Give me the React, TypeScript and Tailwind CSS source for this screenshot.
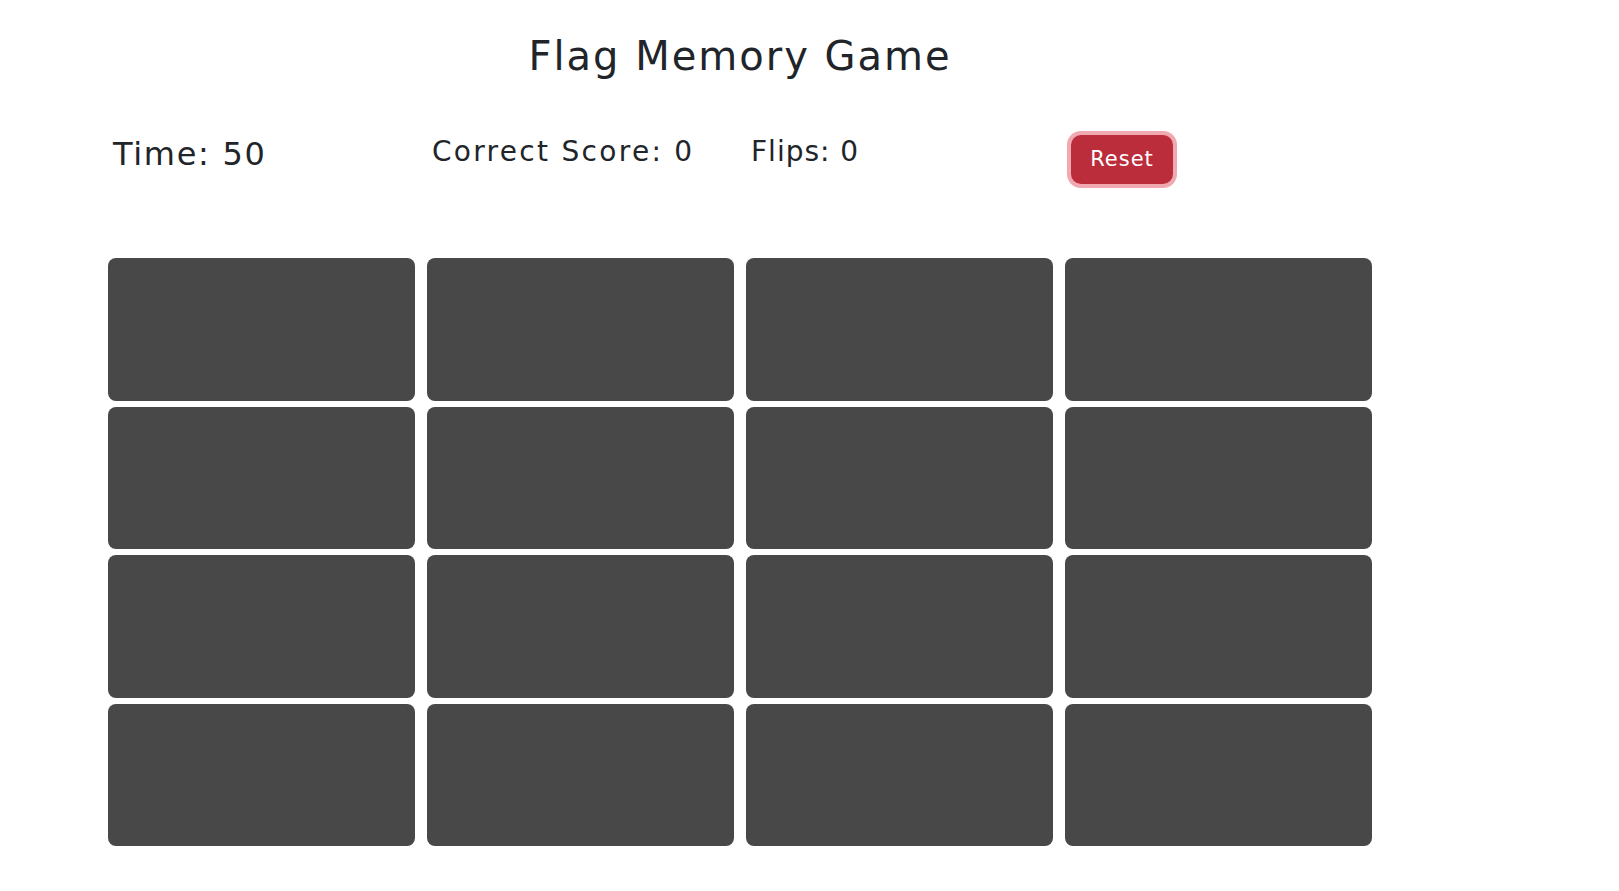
import { useState } from 'react';

const CARDS = Array.from({ length: 16 }, (_, i) => i);

export default function App() {
  const [time] = useState(50);
  const [score, setScore] = useState(0);
  const [flips, setFlips] = useState(0);

  function reset() {
    setScore(0);
    setFlips(0);
  }

  return (
    <div className="min-h-screen bg-white text-[#212529] font-['DejaVu_Sans',sans-serif]">
      <div className="ml-[108px] w-[1264px] pt-[32px]">
        {/* Title */}
        <h1 className="text-center text-[40px] leading-[1.2] tracking-[2px] font-normal">
          Flag Memory Game
        </h1>

        {/* Stats row */}
        <div className="mt-[52px] grid grid-cols-4 gap-x-3 items-start">
          <div className="pl-[5px] mt-[3px] text-[32px] leading-[1.2] tracking-[1.7px] slashed-zero">
            Time: {time}
          </div>
          <div className="pl-[5px] mt-[3px] text-[28px] leading-[1.2] tracking-[2.3px] slashed-zero">
            Correct Score: {score}
          </div>
          <div className="pl-[5px] mt-[3px] text-[28px] leading-[1.2] tracking-[1px] slashed-zero">
            Flips: {flips}
          </div>
          <div className="pl-[6px] mt-[3px]">
            <button
              onClick={reset}
              className="flex h-[49px] w-[102px] items-center justify-center rounded-[10px] bg-[#bb2d3b] text-[21px] tracking-[1px] text-white shadow-[0_0_0_4px_#f0a9b0]"
            >
              Reset
            </button>
          </div>
        </div>

        {/* Card grid */}
        <div className="mt-[74px] grid grid-cols-4 gap-x-3 gap-y-[6px]">
          {CARDS.map((c) => (
            <div
              key={c}
              onClick={() => setFlips((f) => f + 1)}
              className="h-[142.5px] rounded-lg bg-[#484848] cursor-pointer"
            />
          ))}
        </div>
      </div>
    </div>
  );
}
